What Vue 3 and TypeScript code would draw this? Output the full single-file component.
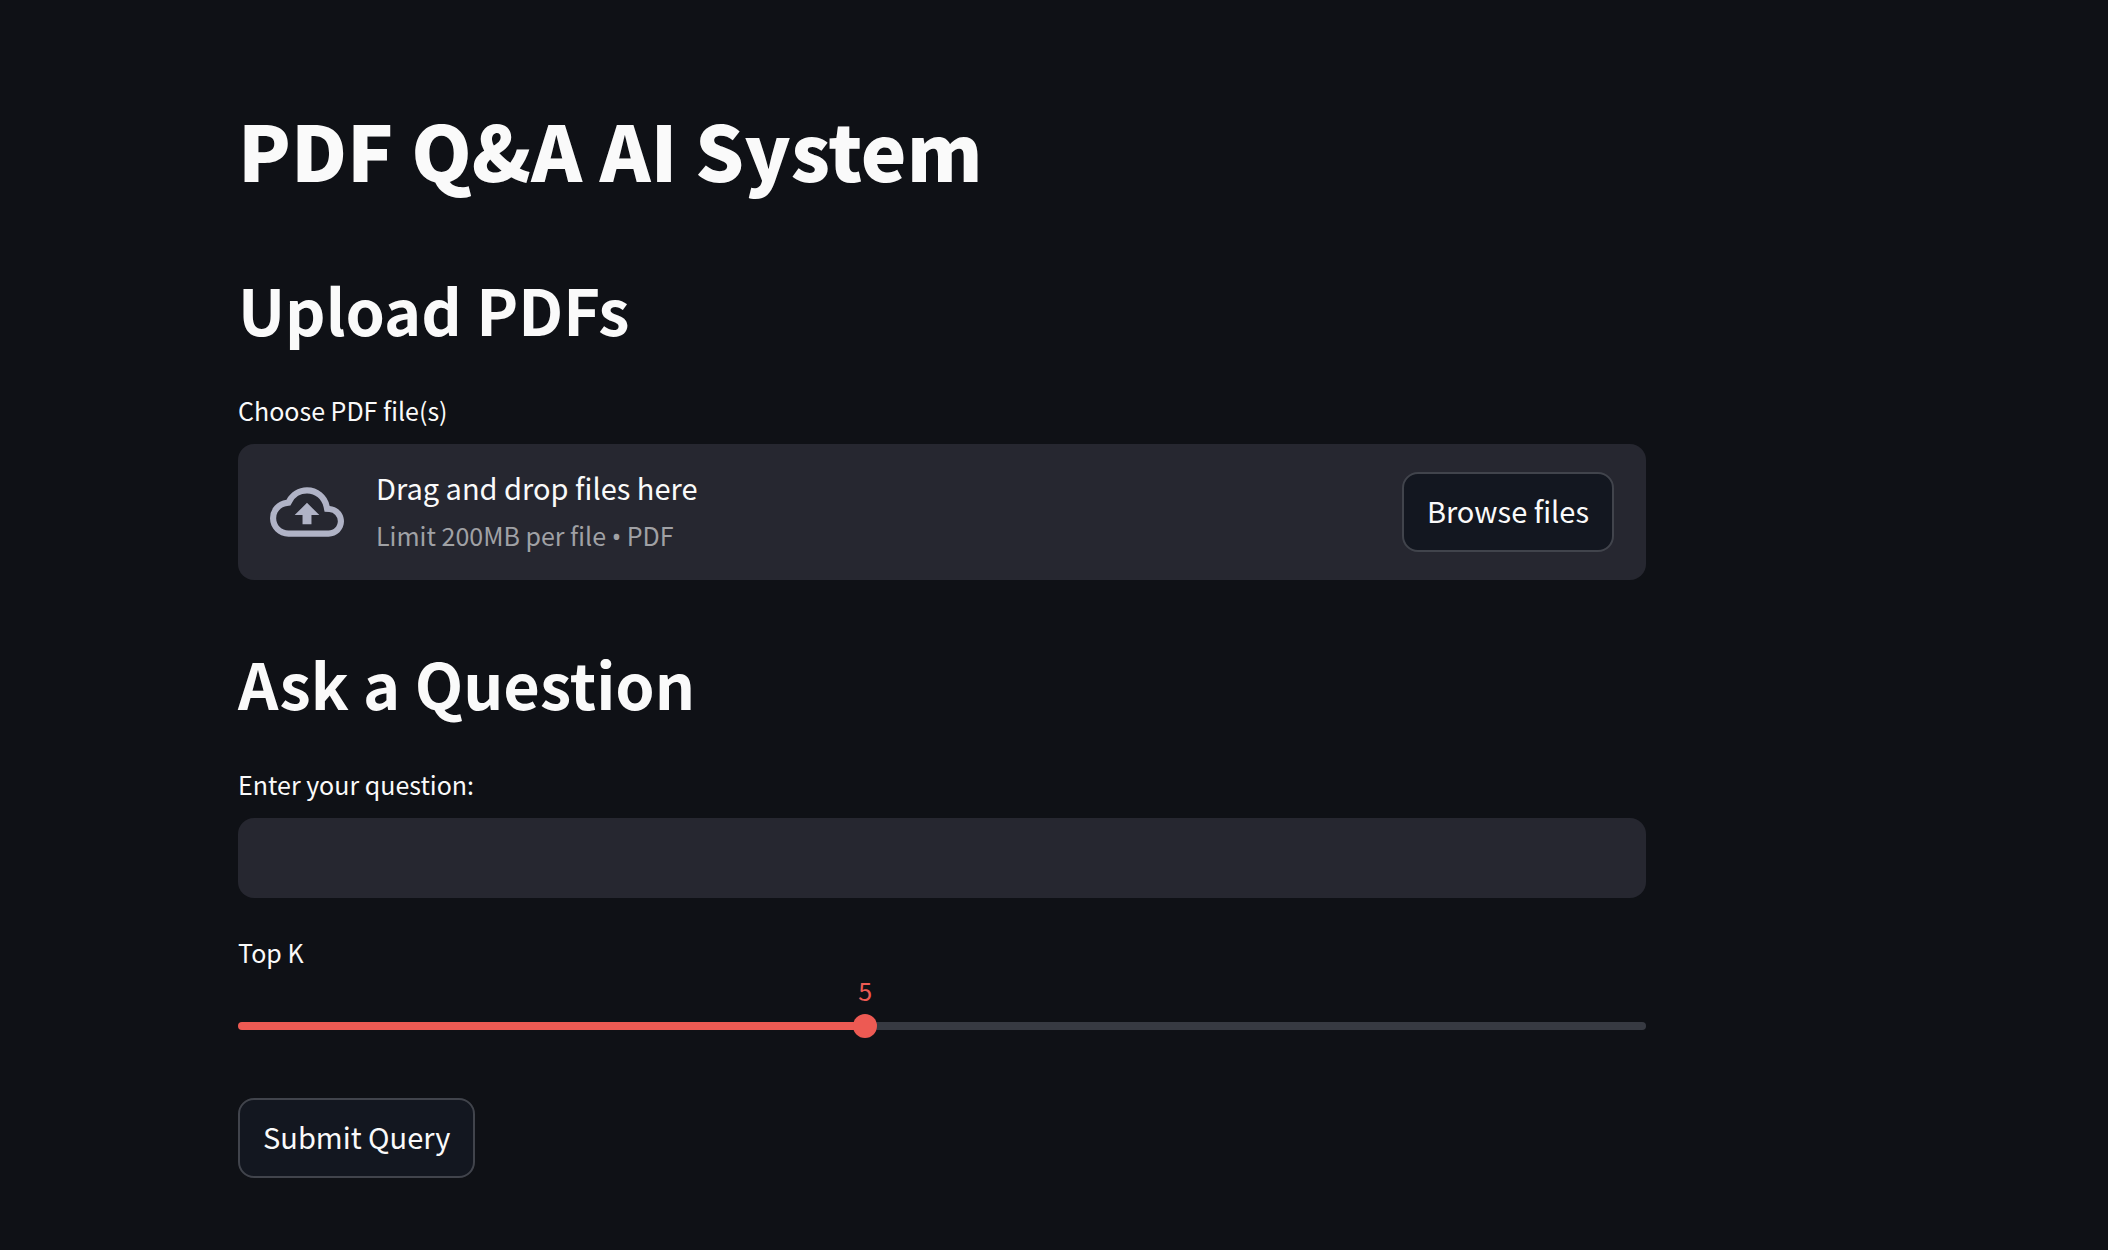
<script setup lang="ts">
import { computed, ref } from 'vue'

const MIN_K = 1
const MAX_K = 10

const question = ref('')
const topK = ref(5)
const picker = ref<HTMLInputElement | null>(null)

const percent = computed(() => ((topK.value - MIN_K) / (MAX_K - MIN_K)) * 100)

function browse(): void {
  picker.value?.click()
}
</script>

<template>
  <main class="page">
    <h1 class="title">PDF Q&amp;A AI System</h1>

    <section>
      <h2 class="heading">Upload PDFs</h2>
      <label class="label" for="pdf-files">Choose PDF file(s)</label>
      <div class="dropzone">
        <svg class="cloud" viewBox="0 0 24 24" aria-hidden="true">
          <path
            d="M19.35 10.04A7.49 7.49 0 0 0 12 4C9.11 4 6.6 5.64 5.35 8.04A5.994 5.994 0 0 0 0 14c0 3.31 2.69 6 6 6h13c2.76 0 5-2.24 5-5 0-2.64-2.05-4.78-4.65-4.96zM19 18H6c-2.21 0-4-1.79-4-4 0-2.05 1.53-3.76 3.56-3.97l1.07-.11.5-.95A5.469 5.469 0 0 1 12 6c2.62 0 4.88 1.86 5.39 4.43l.3 1.5 1.53.11A2.98 2.98 0 0 1 22 15c0 1.65-1.35 3-3 3zM8 13h2.55v3h2.9v-3H16l-4-4z"
          />
        </svg>
        <div class="instructions">
          <span class="lead">Drag and drop files here</span>
          <span class="limit">Limit 200MB per file <span class="dot">•</span> PDF</span>
        </div>
        <input id="pdf-files" ref="picker" class="picker" type="file" accept=".pdf" multiple />
        <button class="button" type="button" @click="browse">Browse files</button>
      </div>
    </section>

    <form class="ask" @submit.prevent>
      <h2 class="heading">Ask a Question</h2>
      <label class="label" for="question">Enter your question:</label>
      <input id="question" v-model="question" class="textbox" type="text" autocomplete="off" />

      <label class="label slider-label" for="top-k">Top K</label>
      <div class="slider" :style="{ '--fill': percent + '%' }">
        <div class="scale">
          <output class="value" for="top-k">{{ topK }}</output>
        </div>
        <input id="top-k" v-model.number="topK" class="range" type="range" :min="MIN_K" :max="MAX_K" />
      </div>

      <button class="button submit" type="submit">Submit Query</button>
    </form>
  </main>
</template>

<style>
body {
  margin: 0;
  background: #0f1116;
}
</style>

<style scoped>
.page {
  box-sizing: border-box;
  max-width: 1646px;
  padding: 101px 0 72px 238px;
  color: #fafafa;
  font-family: 'Source Sans Pro', 'Noto Sans CJK SC', sans-serif;
  font-size: 29px;
}

.title {
  margin: 0 0 72px;
  font-size: 77px;
  font-weight: 900;
  line-height: 96px;
}

.heading {
  margin: 0 0 43px;
  font-size: 63px;
  font-weight: 700;
  line-height: 80px;
}

.label {
  display: block;
  margin-bottom: 16px;
  font-size: 25px;
  line-height: 36px;
}

.dropzone {
  position: relative;
  display: flex;
  align-items: center;
  gap: 32px;
  box-sizing: border-box;
  min-height: 136px;
  padding: 16px 32px;
  border-radius: 16px;
  background: #262730;
}

.cloud {
  flex: none;
  width: 74px;
  height: 74px;
  fill: #b0b3c6;
}

.instructions {
  display: flex;
  flex: 1;
  flex-direction: column;
  gap: 6px;
}

.lead {
  line-height: 40px;
}

.limit {
  color: #a0a1a5;
  font-size: 25px;
  line-height: 44px;
}

.dot {
  font-family: 'Noto Sans', sans-serif;
  line-height: 1;
}

.picker {
  position: absolute;
  width: 1px;
  height: 1px;
  overflow: hidden;
  opacity: 0;
  pointer-events: none;
}

.button {
  box-sizing: border-box;
  min-height: 80px;
  padding: 0 23px 4px;
  border: 2px solid #41444c;
  border-radius: 16px;
  background: #131720;
  color: inherit;
  font: inherit;
  line-height: 40px;
  cursor: pointer;
}

.ask {
  margin-top: 63px;
}

.textbox {
  display: block;
  box-sizing: border-box;
  width: 100%;
  height: 80px;
  padding: 0 24px;
  border: 0;
  border-radius: 16px;
  outline: none;
  background: #262730;
  color: inherit;
  font: inherit;
}

.slider-label {
  margin: 36px 0 2px;
}

.scale {
  position: relative;
  height: 36px;
  margin: 0 12px;
}

.value {
  position: absolute;
  left: var(--fill);
  transform: translateX(-50%);
  color: #ed5a53;
  font-size: 25px;
  line-height: 36px;
}

.range {
  display: block;
  width: 100%;
  height: 36px;
  margin: 0;
  appearance: none;
  background: transparent;
  cursor: pointer;
}

.range::-webkit-slider-runnable-track {
  height: 8px;
  border-radius: 4px;
  background: linear-gradient(to right, #ed5a53 var(--fill), #373a42 var(--fill));
}

.range::-webkit-slider-thumb {
  width: 24px;
  height: 24px;
  margin-top: -8px;
  border: 0;
  border-radius: 50%;
  appearance: none;
  background: #ed5a53;
}

.submit {
  margin-top: 54px;
}

@media (max-width: 1200px) {
  .page {
    padding-right: 32px;
    padding-left: 32px;
  }
}
</style>
